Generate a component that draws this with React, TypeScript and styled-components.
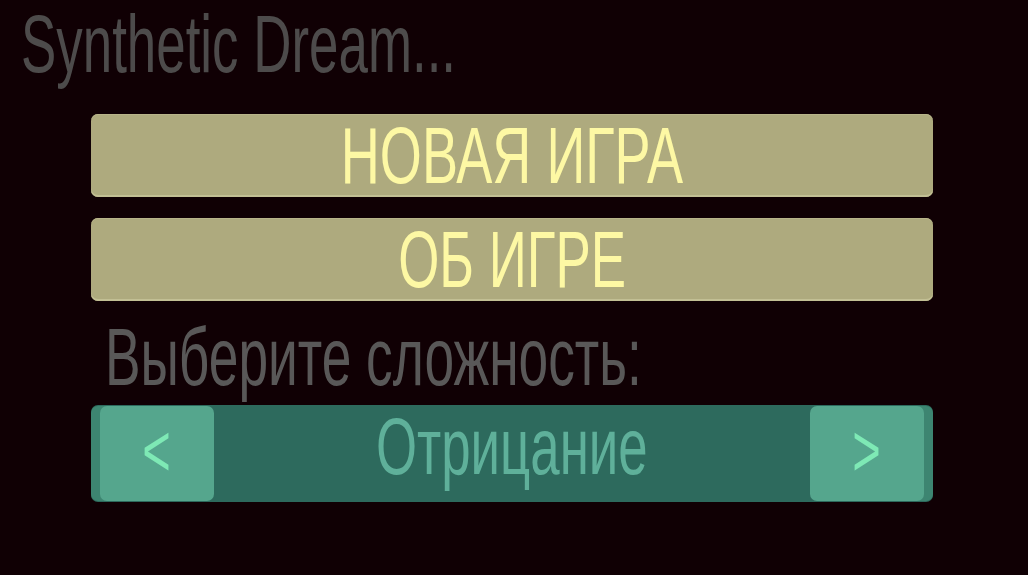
import React from "react";
import styled, { createGlobalStyle } from "styled-components";

const GlobalStyle = createGlobalStyle`
  html, body {
    margin: 0;
    padding: 0;
    background: #100004;
  }
  body {
    font-family: "Liberation Sans", Arial, sans-serif;
  }
`;

const Screen = styled.div`
  width: 1028px;
  height: 575px;
  background: #100004;
  overflow: hidden;
  padding-top: 4px;
  box-sizing: border-box;
`;

const Title = styled.h1`
  margin: 0 0 0 21px;
  font-size: 82px;
  line-height: 80px;
  font-weight: 400;
  color: #4d4b4b;
  white-space: nowrap;
`;

const Narrow = styled.span<{ $origin?: string; $scale?: number }>`
  display: inline-block;
  transform: scaleX(${(p) => p.$scale ?? 0.66});
  transform-origin: ${(p) => p.$origin ?? "center"};
  white-space: nowrap;
`;

const Menu = styled.div`
  width: 842px;
  margin: 30px 0 0 91px;
  display: flex;
  flex-direction: column;
`;

const MenuButton = styled.button`
  height: 83px;
  margin: 0 0 21px;
  padding: 0;
  border: none;
  border-radius: 7px;
  background: #aeaa7e;
  box-shadow: inset 0 -2px 0 #c2bf94, inset 0 1px 0 #b8b48a;
  color: #fdf8a4;
  font-family: inherit;
  font-size: 79px;
  line-height: 80px;
  display: flex;
  align-items: center;
  justify-content: center;
  &:last-of-type {
    margin-bottom: 0;
  }
`;

const Caption = styled.div`
  margin: 16px 0 8px 14px;
  font-size: 81px;
  line-height: 80px;
  color: #595858;
`;

const Selector = styled.div`
  height: 97px;
  padding: 1px 9px;
  box-sizing: border-box;
  border-radius: 7px;
  background: #2d6a5d;
  display: flex;
  align-items: stretch;
`;

const Arrow = styled.button<{ $side: "left" | "right" }>`
  width: 114px;
  padding: 0 0 6px;
  border: none;
  border-radius: 7px;
  background: #55a68d;
  box-shadow: ${(p) => (p.$side === "left" ? "-9px" : "9px")} 0 0 #3d8571;
  color: #7ee9b5;
  font-family: inherit;
  font-size: 74px;
  line-height: 74px;
  display: flex;
  align-items: center;
  justify-content: center;
`;

const Option = styled.div`
  flex: 1;
  display: flex;
  align-items: center;
  justify-content: center;
  padding-bottom: 14px;
  font-size: 80px;
  line-height: 80px;
  color: #5fb09a;
`;

export default function App() {
  return (
    <Screen>
      <GlobalStyle />
      <Title>
        <Narrow $origin="left" $scale={0.645}>
          Synthetic Dream...
        </Narrow>
      </Title>
      <Menu>
        <MenuButton>
          <Narrow $scale={0.685}>НОВАЯ ИГРА</Narrow>
        </MenuButton>
        <MenuButton>
          <Narrow $scale={0.67}>ОБ ИГРЕ</Narrow>
        </MenuButton>
        <Caption>
          <Narrow $origin="left" $scale={0.658}>
            Выберите сложность:
          </Narrow>
        </Caption>
        <Selector>
          <Arrow $side="left">
            <Narrow>&lt;</Narrow>
          </Arrow>
          <Option>
            <Narrow>Отрицание</Narrow>
          </Option>
          <Arrow $side="right">
            <Narrow>&gt;</Narrow>
          </Arrow>
        </Selector>
      </Menu>
    </Screen>
  );
}
